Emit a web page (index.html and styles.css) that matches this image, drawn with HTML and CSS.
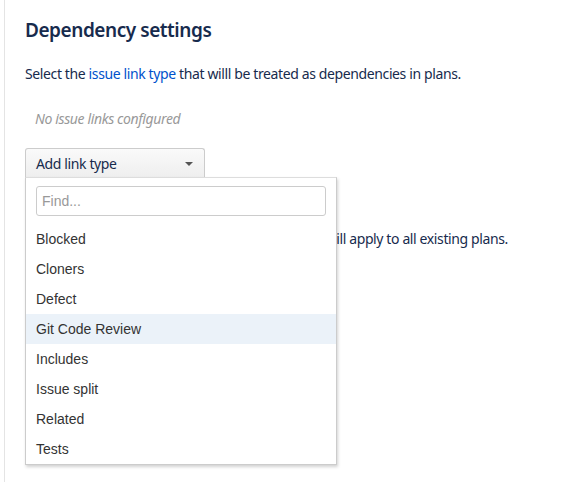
FILE: index.html
```html
<!DOCTYPE html>
<html>
<head>
<meta charset="utf-8">
<link rel="stylesheet" href="styles.css">
</head>
<body>
<div class="page">
  <h1 class="title">Dependency settings</h1>
  <p class="desc">Select the <a class="link" href="#">issue link type</a> that willl be treated as dependencies in plans.</p>
  <p class="empty">No issue links configured</p>
  <div class="picker">
    <button class="picker-btn">Add link type<span class="caret"></span></button>
    <div class="menu">
      <div class="find-wrap"><input class="find" placeholder="Find..."></div>
      <ul class="items">
        <li class="item">Blocked</li>
        <li class="item">Cloners</li>
        <li class="item">Defect</li>
        <li class="item active">Git Code Review</li>
        <li class="item">Includes</li>
        <li class="item">Issue split</li>
        <li class="item">Related</li>
        <li class="item">Tests</li>
      </ul>
    </div>
  </div>
  <p class="note">Changes to dependency settings will apply to all existing plans.</p>
</div>
</body>
</html>
```
FILE: styles.css
```css
html, body { margin: 0; padding: 0; background: #fff; }
body { font-family: "Noto Sans", "Open Sans", sans-serif; color: #172b4d; }
.page {
  margin-left: 4px;
  border-left: 1px solid #e4e4e4;
  padding: 15px 0 0 20px;
  min-height: 467px;
}
.title { margin: 0; font-size: 19px; font-weight: 600; line-height: 30px; color: #172b4d; letter-spacing: -0.45px; }
.desc { margin: 19px 0 0; font-size: 14px; line-height: 20px; letter-spacing: -0.38px; }
.link { color: #0052cc; text-decoration: none; }
.empty { margin: 25px 0 0 10px; font-size: 14px; line-height: 20px; font-style: italic; color: #999; letter-spacing: -0.38px; }
.picker { position: relative; margin-top: 19px; height: 29px; }
.picker-btn {
  display: flex; align-items: center; justify-content: space-between;
  width: 180px; height: 30px; padding: 0 10px 0 10px; box-sizing: border-box;
  border: 1px solid #ccc; border-bottom: none; border-radius: 3px 3px 0 0;
  background: linear-gradient(#fafafa, #eeeeee);
  font-family: "Noto Sans", "Open Sans", sans-serif; font-size: 14px; color: #172b4d; letter-spacing: -0.38px;
}
.caret { width: 0; height: 0; border-left: 4px solid transparent; border-right: 4px solid transparent; border-top: 4px solid #555; margin-right: 1px; }
.menu {
  position: absolute; left: 0; top: 29px; width: 312px; box-sizing: border-box;
  background: #fff; border: 1px solid #ccc; border-top-color: #ddd;
  box-shadow: 1px 2px 3px rgba(0,0,0,0.18);
  z-index: 2; padding-top: 8px;
}
.find-wrap { padding: 0 10px; }
.find {
  display: block; width: 100%; height: 30px; box-sizing: border-box;
  border: 1px solid #ccc; border-radius: 3px; padding: 0 5px;
  font-family: "Liberation Sans", Arial, sans-serif; font-size: 14px; color: #333;
}
.find::placeholder { color: #999; }
.items { list-style: none; margin: 8px 0 0; padding: 0; }
.item {
  height: 30px; line-height: 30px; padding-left: 10px;
  font-family: "Liberation Sans", Arial, sans-serif; font-size: 14px; color: #333;
}
.item.active { background: #ebf2f9; }
.note { margin: 52px 0 0; width: 483px; text-align: right; font-size: 14px; line-height: 20px; white-space: nowrap; letter-spacing: -0.38px; }
```
